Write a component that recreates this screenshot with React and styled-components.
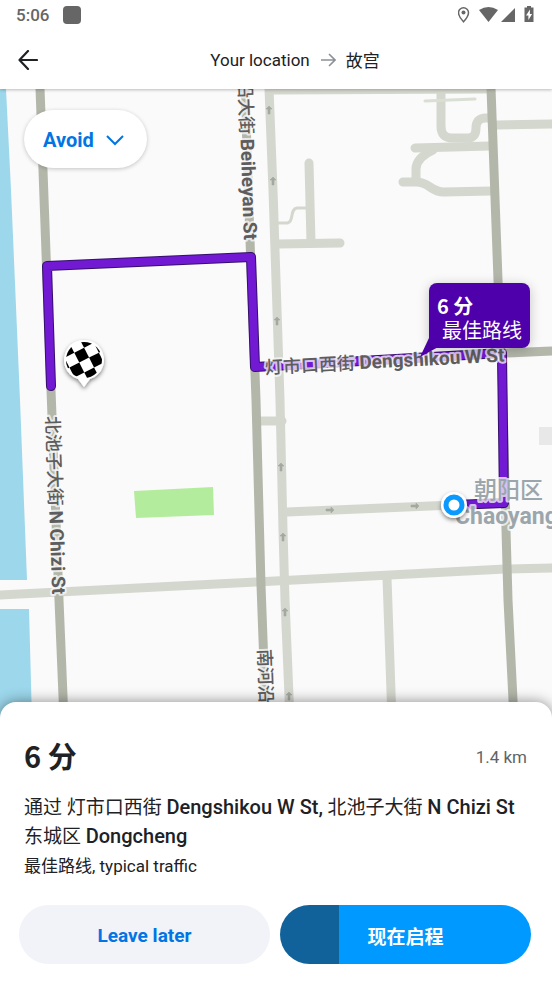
import React from "react";
import styled, { createGlobalStyle, css } from "styled-components";

const sans = `Roboto, "Noto Sans CJK SC", sans-serif`;
const han = `"Noto Sans CJK SC", sans-serif`;

const GlobalStyle = createGlobalStyle`
  * { box-sizing: border-box; }
  body { margin: 0; background: #fff; }
  button { border: 0; padding: 0; font: inherit; cursor: pointer; }
`;

const Page = styled.div`
  min-height: 100vh;
  display: flex;
  flex-direction: column;
  font-family: ${sans};
  color: #202124;
  background: #fff;
`;

const StatusBar = styled.div`
  position: relative;
  z-index: 2;
  display: flex;
  align-items: center;
  justify-content: space-between;
  height: 30px;
  padding: 0 16px;
  color: #666;
  background: #fff;
  font-size: 17px;
  font-weight: 500;
`;

const StatusGroup = styled.div`
  display: flex;
  align-items: center;
  gap: 14px;
`;

const AppBadge = styled.span`
  width: 18px;
  height: 18px;
  border-radius: 4px;
  background: #666;
`;

const Header = styled.header`
  position: relative;
  z-index: 1;
  display: grid;
  grid-template-columns: 56px 1fr 18px;
  align-items: center;
  height: 59px;
  background: #fff;
  box-shadow: 0 1px 3px rgba(0, 0, 0, 0.25);
`;

const BackButton = styled.button`
  display: grid;
  place-items: center;
  height: 48px;
  color: #202124;
  background: none;
`;

const RouteTitle = styled.h1`
  display: flex;
  align-items: center;
  justify-content: center;
  gap: 10px;
  margin: 0;
  font-size: 17px;
  font-weight: 400;
`;

const MapArea = styled.main`
  position: relative;
  display: flex;
  flex: 1;
  min-height: 320px;
  overflow: hidden;
  background: #fafafa;
`;

const MapDrawing = styled.svg`
  flex: 1;
  min-width: 0;
  font-family: ${sans};
`;

const AvoidButton = styled.button`
  position: absolute;
  top: 21px;
  left: 24px;
  display: flex;
  align-items: center;
  gap: 12px;
  height: 58px;
  padding: 1px 23px 0 19px;
  border-radius: 29px;
  color: #0075e3;
  background: #fff;
  box-shadow: 0 1px 4px rgba(0, 0, 0, 0.22);
  font-size: 20px;
  font-weight: 700;
`;

const Callout = styled.div`
  position: absolute;
  top: 194px;
  left: 429px;
  width: 101px;
  padding: 11px 8px 6px;
  border-radius: 8px;
  color: #fff;
  background: #4e00ab;
  box-shadow: 0 2px 12px rgba(0, 0, 0, 0.22);
  font-family: ${han};
  font-size: 20px;
  line-height: 24px;
  white-space: nowrap;
`;

const CalloutTime = styled.div`
  font-weight: 700;
`;

const CalloutNote = styled.div`
  padding-left: 5px;
`;

const Sheet = styled.section`
  position: relative;
  margin-top: -16px;
  padding: 34px 20px 18px;
  border-radius: 16px 16px 0 0;
  background: #fff;
  box-shadow: 0 0 14px rgba(0, 0, 0, 0.45);
`;

const Summary = styled.div`
  display: flex;
  align-items: center;
  justify-content: space-between;
  height: 42px;
  padding: 0 5px 0 4px;
`;

const Duration = styled.h2`
  margin: 0;
  padding-bottom: 4px;
  font-family: ${han};
  font-size: 29px;
  font-weight: 700;
  line-height: 38px;
`;

const Distance = styled.span`
  color: #5f6368;
  font-size: 17px;
`;

const Via = styled.p`
  margin: 15px 0 0;
  padding-left: 4px;
  font-size: 19px;
  line-height: 29px;
`;

const Latin = styled.span`
  font-size: 20px;
  font-weight: 500;
`;

const Traffic = styled.p`
  margin: 3px 0 0;
  padding-left: 4px;
  font-size: 17px;
  line-height: 24px;
`;

const Actions = styled.div`
  display: grid;
  grid-template-columns: 1fr 1fr;
  gap: 10px;
  margin: 27px 1px 0 -1px;
`;

const ActionButton = styled.button`
  height: 59px;
  padding-top: 1px;
  border-radius: 30px;
  font-size: 19px;
  font-weight: 700;
  ${(p) =>
    p.$primary
      ? css`
          color: #fff;
          background: linear-gradient(to right, #11629a 59px, #0099ff 59px);
        `
      : css`
          color: #0075e3;
          background: #f2f3f8;
        `}
`;

const darkRoads = [
  "M40 88L51 390L59 600L64 720",
  "M245 88L250 240L256 400L261 585L266 720",
  "M491 88L498 280L503 400L506 530L508 600L514 720",
  "M505 353L552 351",
];

const lightRoads = [
  "M269 88L273 190L280 400L283 530L285 600L290 720",
  "M272 90L490 89",
  "M497 125L552 124",
  "M441 90L441 126Q441 138 452 138L468 138Q476 138 476 128Q476 118 486 118L490 118",
  "M490 146L415 148",
  "M433 150Q416 158 416 169L416 180",
  "M403 182L416 182Q423 182 430 187Q437 192 444 192L492 191",
  "M309 163L311 243",
  "M278 244L340 243",
  "M258 421L282 421",
  "M0 595L256 582L505 569L552 568",
  "M287 512L454 505",
  "M387 578L392 720",
];

const arrows = [
  [269, 110, 0], [273, 181, 0], [277, 321, 0], [281, 467, 0], [283, 537, 0],
  [285, 612, 0], [289, 696, 0], [330, 510, 90], [415, 506, 90],
];

const routePath = "M51 386L47 266L251 257L255 367L502 353L504 503L454 505";

const Road = ({ d, color, width = 9 }) => (
  <path d={d} fill="none" stroke={color} strokeWidth={width} strokeLinecap="round" strokeLinejoin="round" />
);

const MapLabel = styled.text`
  font-size: ${(p) => (p.$district ? 23 : 18)}px;
  font-weight: 500;
  fill: ${(p) => (p.$district ? "#9ba6ac" : "#5d5d5d")};
  stroke: rgba(250, 250, 250, 0.75);
  stroke-width: 4px;
  stroke-linejoin: round;
  paint-order: stroke;
`;

const LatinName = styled.tspan`
  font-size: ${(p) => (p.$district ? 23 : 19)}px;
  font-weight: 700;
`;

const cells = [-3, -2, -1, 0, 1, 2, 3];

function CityMap() {
  return (
    <MapDrawing viewBox="0 89 552 629" preserveAspectRatio="xMidYMin slice" role="img" aria-label="Route map">
      <defs>
        <clipPath id="flag"><circle cx="84" cy="360" r="18" /></clipPath>
        <filter id="soft" x="-50%" y="-50%" width="200%" height="200%">
          <feDropShadow dx="0" dy="2" stdDeviation="2" floodOpacity="0.5" />
        </filter>
      </defs>
      <rect x="0" y="89" width="552" height="640" fill="#fafafa" />
      <path d="M0 89H6L11 190L20 400L27 580H0ZM0 609H29L32 720H0Z" fill="#9cd7eb" />
      <path d="M134 491L213 487L214 515L136 518Z" fill="#b4ec9e" />
      <rect x="539" y="427" width="20" height="18" fill="#e8e8e8" />
      {lightRoads.map((d) => <Road key={d} d={d} color="#d4d7ce" />)}
      <Road d="M425 101L475 99" color="#d9dfd4" width={3} />
      <Road d="M278 223H286C295 223 289 209 297 208H308" color="#d4d7ce" width={3} />
      {darkRoads.map((d) => <Road key={d} d={d} color="#b3b7aa" />)}
      {arrows.map(([x, y, r]) => (
        <path key={`${x}-${y}`} transform={`translate(${x} ${y}) rotate(${r})`} d="M0 -4L3 -1H1V4H-1V-1H-3Z" fill="#a5a8a1" stroke="#a5a8a1" strokeWidth="0.6" />
      ))}
      <Road d={routePath} color="#35106b" width={10} />
      <Road d={routePath} color="#7219d3" width={8} />
      <MapLabel x="0" y="6" transform="translate(52 416) rotate(88)">北池子大街 <LatinName>N Chizi St</LatinName></MapLabel>
      <MapLabel x="0" y="6" textAnchor="end" transform="translate(250 240) rotate(88)">北河沿大街 <LatinName>Beiheyan St</LatinName></MapLabel>
      <MapLabel x="0" y="6" transform="translate(264 649) rotate(88)">南河沿大街</MapLabel>
      <MapLabel x="0" y="6" transform="translate(265 368) rotate(-3)">灯市口西街 <LatinName>Dengshikou W St</LatinName></MapLabel>
      <MapLabel $district x="474" y="498">朝阳区</MapLabel>
      <MapLabel $district x="455" y="524"><LatinName $district>Chaoyang</LatinName></MapLabel>
      <g filter="url(#soft)">
        <path d="M84 387L78 379A20 20 0 1 1 90 379Z" fill="#fff" />
      </g>
      <g clipPath="url(#flag)">
        <g transform="translate(81 355) rotate(-27)" fill="#000">
          {cells.flatMap((r) =>
            cells
              .filter((c) => (r + c) % 2 === 0)
              .map((c) => <rect key={`${r}:${c}`} x={c * 11 - 5} y={r * 11 - 5} width="11" height="11" />)
          )}
        </g>
      </g>
      <circle cx="454" cy="505" r="13" fill="#fff" filter="url(#soft)" />
      <circle cx="454" cy="505" r="8" fill="#fff" stroke="#0a99ff" strokeWidth="5" />
      <path d="M429 338L420 357L440 346Z" fill="#4e00ab" />
    </MapDrawing>
  );
}

export default function App() {
  return (
    <Page>
      <GlobalStyle />
      <StatusBar>
        <StatusGroup>
          <span>5:06</span>
          <AppBadge />
        </StatusGroup>
        <svg width="78" height="18" viewBox="458 6 78 18" fill="#666" aria-hidden="true">
          <path d="M463.500 7.800a5 5 0 0 0-5 5c0 3.600 5 9 5 9s5-5.400 5-9a5 5 0 0 0-5-5Z" fill="none" stroke="#666" strokeWidth="1.500" overflow="visible" />
          <circle cx="463.500" cy="12.500" r="2" />
          <path d="M479 10Q488.500 4 498 10L488.500 22Z" />
          <path d="M515 8V22H501Z" />
          <path fillRule="evenodd" d="M527 6h4v1.500h2.500v14.500h-9V7.500h2.500ZM530 9.500l-4 6h2.400v4.500l3.700-6h-2.300Z" />
        </svg>
      </StatusBar>
      <Header>
        <BackButton aria-label="Back">
          <svg width="20" height="20" viewBox="0 0 20 20" fill="none" stroke="currentColor" strokeWidth="2.200" strokeLinecap="round" strokeLinejoin="round">
            <path d="M19 10H1.500M10 1L1.500 10L10 19" />
          </svg>
        </BackButton>
        <RouteTitle>
          <span>Your location</span>
          <svg width="16" height="14" viewBox="0 0 16 14" fill="none" stroke="#8b9099" strokeWidth="1.600" aria-hidden="true">
            <path d="M1 7H15M9 1L15 7L9 13" />
          </svg>
          <span>故宫</span>
        </RouteTitle>
      </Header>
      <MapArea>
        <CityMap />
        <AvoidButton>
          Avoid
          <svg width="18" height="12" viewBox="0 0 18 12" fill="none" stroke="currentColor" strokeWidth="2" aria-hidden="true">
            <path d="M1 2L9 10L17 2" />
          </svg>
        </AvoidButton>
        <Callout>
          <CalloutTime>6 分</CalloutTime>
          <CalloutNote>最佳路线</CalloutNote>
        </Callout>
      </MapArea>
      <Sheet>
        <Summary>
          <Duration>6 分</Duration>
          <Distance>1.4 km</Distance>
        </Summary>
        <Via>
          通过 灯市口西街 <Latin>Dengshikou W St,</Latin> 北池子大街 <Latin>N Chizi St</Latin>
          <br />
          东城区 <Latin>Dongcheng</Latin>
        </Via>
        <Traffic>最佳路线, typical traffic</Traffic>
        <Actions>
          <ActionButton>Leave later</ActionButton>
          <ActionButton $primary>现在启程</ActionButton>
        </Actions>
      </Sheet>
    </Page>
  );
}
